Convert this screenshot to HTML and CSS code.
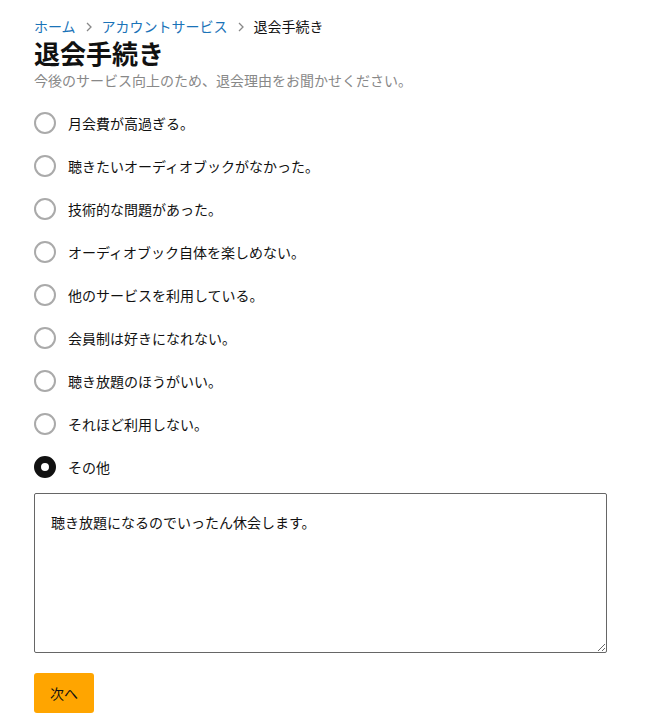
FILE: index.html
```html
<!DOCTYPE html>
<html lang="ja">
<head>
<meta charset="utf-8">
<link rel="stylesheet" href="styles.css">
</head>
<body>
<main class="page">
  <nav class="crumbs">
    <a class="crumb-link" href="#">ホーム</a>
    <svg class="sep" width="6" height="10" viewBox="0 0 6 10"><path d="M1 1 L5 5 L1 9" fill="none" stroke="#888" stroke-width="1.3"/></svg>
    <a class="crumb-link" href="#">アカウントサービス</a>
    <svg class="sep" width="6" height="10" viewBox="0 0 6 10"><path d="M1 1 L5 5 L1 9" fill="none" stroke="#888" stroke-width="1.3"/></svg>
    <span class="crumb-current">退会手続き</span>
  </nav>
  <h1 class="title">退会手続き</h1>
  <p class="lead">今後のサービス向上のため、退会理由をお聞かせください。</p>
  <ul class="reasons">
    <li class="reason"><span class="radio"></span><span>月会費が高過ぎる。</span></li>
    <li class="reason"><span class="radio"></span><span>聴きたいオーディオブックがなかった。</span></li>
    <li class="reason"><span class="radio"></span><span>技術的な問題があった。</span></li>
    <li class="reason"><span class="radio"></span><span>オーディオブック自体を楽しめない。</span></li>
    <li class="reason"><span class="radio"></span><span>他のサービスを利用している。</span></li>
    <li class="reason"><span class="radio"></span><span>会員制は好きになれない。</span></li>
    <li class="reason"><span class="radio"></span><span>聴き放題のほうがいい。</span></li>
    <li class="reason"><span class="radio"></span><span>それほど利用しない。</span></li>
    <li class="reason"><span class="radio checked"></span><span>その他</span></li>
  </ul>
  <textarea class="comment">聴き放題になるのでいったん休会します。</textarea>
  <div class="actions"><button class="next">次へ</button></div>
</main>
</body>
</html>
```
FILE: styles.css
```css
* { box-sizing: border-box; }
html, body { margin: 0; padding: 0; background: #fff; }
body {
  font-family: "Noto Sans CJK JP", "Noto Sans", sans-serif;
  color: #111;
}
.page {
  padding: 16px 40px 0 34px;
  display: flex;
  flex-direction: column;
}
.crumbs {
  display: flex;
  align-items: center;
  gap: 9px;
  font-size: 14px;
  line-height: 20px;
}
.crumb-link { color: #1a73b8; text-decoration: none; }
.sep { flex: none; margin: 1px 1px 0; }
.crumb-current { color: #111; }
.title {
  margin: 0;
  font-size: 26px;
  line-height: 34px;
  font-weight: 700;
  color: #111;
}
.lead {
  margin: 0;
  font-size: 14px;
  line-height: 20px;
  color: #888;
}
.reasons {
  list-style: none;
  margin: 11px 0 0;
  padding: 0;
  display: flex;
  flex-direction: column;
}
.reason {
  height: 43px;
  display: flex;
  align-items: center;
  gap: 12px;
  font-size: 14px;
  color: #111;
}
.radio {
  width: 22px;
  height: 22px;
  border-radius: 50%;
  border: 2px solid #aaa;
  flex: none;
}
.radio.checked {
  border: 7px solid #111;
  background: #fff;
}
.comment {
  margin-top: 5px;
  width: 573px;
  height: 160px;
  border: 1px solid #666;
  border-radius: 2px;
  padding: 18px 16px;
  font-family: inherit;
  font-size: 14px;
  line-height: 20px;
  color: #111;
  resize: vertical;
}
.actions { margin-top: 20px; display: flex; }
.next {
  width: 60px;
  height: 40px;
  border: none;
  border-radius: 3px;
  background: #ffa500;
  color: #111;
  font-family: inherit;
  font-size: 14px;
  cursor: pointer;
}
```
